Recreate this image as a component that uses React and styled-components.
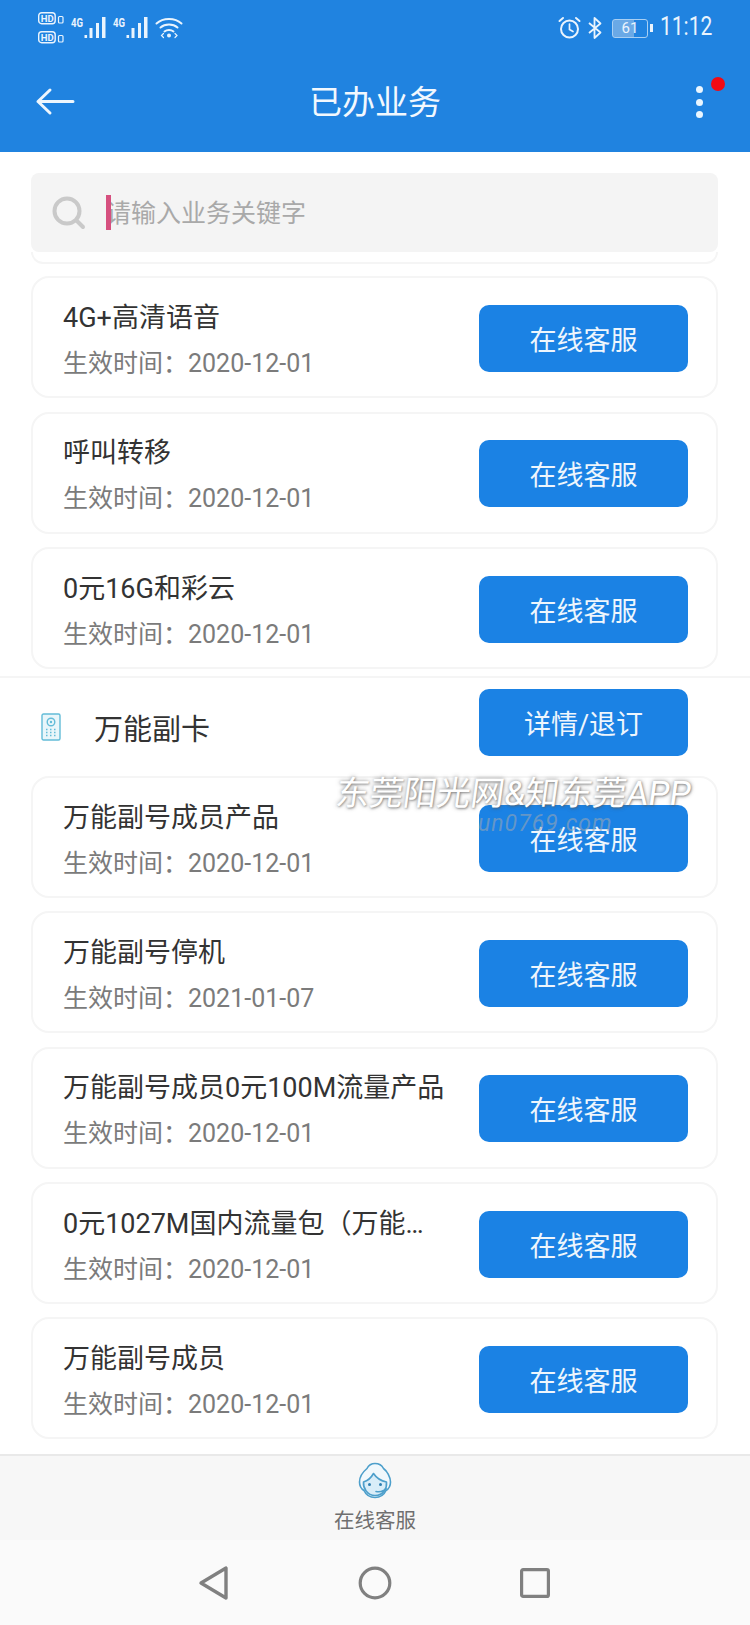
import React from 'react';
import styled, { createGlobalStyle } from 'styled-components';

const GlobalStyle = createGlobalStyle`
  html, body {
    margin: 0;
    padding: 0;
    background: #ffffff;
  }
  * {
    box-sizing: border-box;
  }
`;

const Page = styled.div`
  position: relative;
  width: 750px;
  height: 1625px;
  overflow: hidden;
  display: flex;
  flex-direction: column;
  background: #ffffff;
  font-family: Roboto, "Noto Sans CJK SC", sans-serif;
`;

const Header = styled.header`
  height: 152px;
  flex: none;
  background: #2083e0;
  color: #eaf4fd;
`;

const StatusBar = styled.div`
  height: 54px;
  padding: 12px 39px 0 38px;
  display: flex;
  align-items: flex-start;
  justify-content: space-between;
`;

const StatusGroup = styled.div`
  display: flex;
  align-items: center;
  height: 32px;
  gap: 7px;
`;

const Clock = styled.span`
  display: inline-block;
  font-size: 25px;
  width: 51px;
  margin: -3px 0 0 1px;
  transform: scaleX(0.84);
  transform-origin: left center;
  white-space: nowrap;
`;

const Toolbar = styled.div`
  position: relative;
  height: 96px;
  padding: 0 30px 0 36px;
  display: flex;
  align-items: center;
  justify-content: space-between;
`;

const Title = styled.h1`
  position: absolute;
  left: 0;
  right: 0;
  top: 24px;
  margin: 0;
  text-align: center;
  font-size: 33px;
  line-height: 50px;
  font-weight: 400;
  color: #f2f8fe;
`;

const Dots = styled.div`
  position: relative;
  width: 40px;
  height: 40px;
  display: flex;
  flex-direction: column;
  align-items: center;
  justify-content: center;
  gap: 5.5px;
  margin-right: 1px;
`;

const Dot = styled.span`
  width: 7px;
  height: 7px;
  border-radius: 50%;
  background: #eaf6ff;
`;

const Badge = styled.span`
  position: absolute;
  right: -6px;
  top: -5px;
  width: 14px;
  height: 14px;
  border-radius: 50%;
  background: #f10a14;
`;

const Content = styled.main`
  flex: 1;
  padding-top: 21px;
  overflow: hidden;
`;

const Search = styled.div`
  position: relative;
  height: 79px;
  margin: 0 32px 0 31px;
  padding-left: 21px;
  display: flex;
  align-items: center;
  gap: 20px;
  border-radius: 8px;
  background: #f4f4f4;
`;

const Placeholder = styled.span`
  font-size: 25px;
  color: #a9a9a9;
  margin-bottom: 3px;
`;

const Caret = styled.span`
  position: absolute;
  left: 75px;
  top: 22px;
  width: 5px;
  height: 35px;
  background: #d6507f;
`;

const CardStub = styled.div`
  height: 12px;
  margin: 0 32px 12px 31px;
  border: 2px solid #f5f5f5;
  border-top: none;
  border-radius: 0 0 16px 16px;
`;

const CardList = styled.div`
  display: flex;
  flex-direction: column;
  gap: ${(p) => p.$gap}px;
  margin: 0 32px 0 31px;
`;

const Card = styled.div`
  height: 122px;
  padding: 0 28px 0 30px;
  display: flex;
  align-items: center;
  justify-content: space-between;
  border: 2px solid #f5f5f5;
  border-radius: 18px;
  background: #ffffff;
`;

const CardText = styled.div`
  width: 382px;
  display: flex;
  flex-direction: column;
  gap: 11px;
  margin-top: 6px;
`;

const CardTitle = styled.div`
  font-size: 27px;
  line-height: 36px;
  color: #333333;
  white-space: nowrap;
  overflow: hidden;
  text-overflow: ellipsis;
`;

const CardDate = styled.div`
  font-size: 25px;
  line-height: 34px;
  color: #7b7b7b;
  white-space: nowrap;
`;

const ActionButton = styled.div`
  width: 209px;
  height: 67px;
  flex: none;
  display: flex;
  align-items: center;
  justify-content: center;
  border-radius: 10px;
  background: #1b82e4;
  color: #eef6fd;
  font-size: 27px;
  margin-top: ${(p) => p.$offset || 0}px;
`;

const Section = styled.section`
  margin-top: 7px;
  padding: 11px 32px 20px 41px;
  display: flex;
  align-items: center;
  justify-content: space-between;
  border-top: 2px solid #f5f5f5;
`;

const SectionLabel = styled.div`
  display: flex;
  align-items: center;
  gap: 33px;
  margin-top: 8px;
  font-size: 29px;
  color: #333333;
`;

const SectionButton = styled(ActionButton)`
  margin-right: 30px;
`;

const Watermark = styled.div`
  position: absolute;
  left: 336px;
  top: 772px;
  font-size: 33.7px;
  line-height: 44px;
  white-space: nowrap;
  color: #ffffff;
  transform: skewX(-8deg);
  text-shadow: 0 0 4px rgba(90, 90, 90, 0.7), 1px 1px 2px rgba(90, 90, 90, 0.5);
`;

const WatermarkSite = styled.div`
  position: absolute;
  left: 478px;
  top: 810px;
  font-size: 23px;
  font-style: italic;
  letter-spacing: 1px;
  color: rgba(150, 165, 180, 0.6);
`;

const BottomBar = styled.div`
  height: 86px;
  flex: none;
  display: flex;
  flex-direction: column;
  align-items: center;
  padding-top: 6px;
  border-top: 2px solid #e9e9e9;
  background: #f7f7f7;
  color: #6f6f6f;
  font-size: 20.5px;
`;

const BottomLabel = styled.span`
  line-height: 28px;
  margin-top: 8px;
`;

const NavBar = styled.nav`
  height: 85px;
  flex: none;
  display: flex;
  align-items: center;
  padding: 0 0 0 198px;
  gap: 128px;
  background: #fafafa;
`;

const NavIcon = styled.svg`
  display: block;
  flex: none;
  overflow: visible;
`;

const StatusText = styled.text`
  font-family: Roboto, sans-serif;
  font-weight: 700;
  fill: #eaf4fd;
`;

const SimIcons = () => (
  <NavIcon width="26" height="32" viewBox="0 0 26 32">
    <rect x="0.7" y="0.7" width="16.5" height="11" rx="3" fill="none" stroke="#eaf4fd" strokeWidth="1.4" />
    <StatusText x="2.8" y="9.6" fontSize="9.5">HD</StatusText>
    <rect x="20.5" y="4.5" width="4.5" height="6.5" rx="1" fill="none" stroke="#eaf4fd" strokeWidth="1.2" />
    <rect x="0.7" y="19.7" width="16.5" height="11" rx="3" fill="none" stroke="#eaf4fd" strokeWidth="1.4" />
    <StatusText x="2.8" y="28.6" fontSize="9.5">HD</StatusText>
    <rect x="20.5" y="23.5" width="4.5" height="6.5" rx="1" fill="none" stroke="#eaf4fd" strokeWidth="1.2" />
  </NavIcon>
);

const Signal = () => (
  <NavIcon width="35" height="22" viewBox="0 0 35 22">
    <StatusText x="0" y="10" fontSize="13" textLength="12" lengthAdjust="spacingAndGlyphs">4G</StatusText>
    <g fill="#eaf4fd">
      <rect x="13.5" y="18" width="2.6" height="3" />
      <rect x="18.5" y="11" width="3" height="10" />
      <rect x="25" y="6" width="3" height="15" />
      <rect x="31" y="0" width="3.5" height="21" />
    </g>
  </NavIcon>
);

const Wifi = () => (
  <NavIcon width="28" height="22" viewBox="0 0 28 22" fill="none" stroke="#eaf4fd" strokeWidth="2" strokeLinecap="round">
    <path d="M1.5 6.5 C8 0.5 20 0.5 26.5 6.5" />
    <path d="M5.5 10.5 C10 6.5 18 6.5 22.5 10.5" />
    <path d="M9.5 14.5 C12 12.5 16 12.5 18.5 14.5" />
    <circle cx="14" cy="18.5" r="2" fill="#eaf4fd" stroke="none" />
    <path d="M8.5 16.5 L6.5 18.5 L8.5 20.5 M20 16.5 L22 18.5 L20 20.5" strokeWidth="1.2" />
  </NavIcon>
);

const Alarm = () => (
  <NavIcon width="23" height="24" viewBox="0 0 23 24" fill="none" stroke="#eaf4fd" strokeWidth="2" strokeLinecap="round">
    <circle cx="11.5" cy="13" r="8.5" />
    <path d="M11.5 8 V13.5 L15 15.5" strokeWidth="1.7" />
    <path d="M1.5 5 L5 2 M21.5 5 L18 2" />
  </NavIcon>
);

const Bluetooth = () => (
  <NavIcon width="14" height="24" viewBox="0 0 14 24" fill="none" stroke="#eaf4fd" strokeWidth="1.8" strokeLinejoin="round">
    <path d="M1 7 L12.5 16.5 L6.5 22 V2 L12.5 7.5 L1 17" />
  </NavIcon>
);

const BatteryWrap = styled.div`
  position: relative;
  width: 36px;
  height: 19px;
  border: 1.5px solid #a8cff3;
  border-radius: 3px;
  margin: 0 4px 0 3px;
  display: flex;
  align-items: center;
  justify-content: center;
  font-size: 15px;
  line-height: 16px;
  color: #eaf4fd;
  background: linear-gradient(90deg, #6aa9e6 0 61%, transparent 61%);
`;

const BatteryTip = styled.span`
  position: absolute;
  right: -6px;
  top: 4px;
  width: 3px;
  height: 8px;
  background: #eaf4fd;
`;

const BackArrow = () => (
  <NavIcon width="40" height="30" viewBox="0 0 40 30" fill="none" stroke="#eef6fd" strokeWidth="3" strokeLinecap="round" strokeLinejoin="round">
    <path d="M2 14.5 H37 M14 3 L2 14.5 L14 26" />
  </NavIcon>
);

const SearchIcon = () => (
  <NavIcon width="34" height="34" viewBox="0 0 34 34" fill="none" stroke="#c9c9c9" strokeWidth="4" strokeLinecap="round">
    <circle cx="15" cy="15" r="12.5" />
    <path d="M25 25 L31 31" />
  </NavIcon>
);

const DeviceIcon = () => (
  <NavIcon width="20" height="28" viewBox="0 0 20 28" fill="none" stroke="#63bcd8" strokeWidth="1.4">
    <rect x="1" y="1" width="18" height="26" rx="1.5" fill="#e9f6fa" />
    <circle cx="10" cy="9" r="3.8" />
    <circle cx="10" cy="9" r="1.2" fill="#63bcd8" stroke="none" />
    <path d="M5 16.5 H6.5 M9 16.5 H10.5 M13 16.5 H14.5 M5 19.5 H6.5 M9 19.5 H10.5 M13 19.5 H14.5 M5 22.5 H6.5 M9 22.5 H10.5 M13 22.5 H14.5" strokeWidth="1.5" />
  </NavIcon>
);

const AgentIcon = () => (
  <NavIcon width="34" height="37" viewBox="0 0 34 37" fill="none" stroke="#4d9fcb" strokeWidth="1.6" strokeLinecap="round" strokeLinejoin="round">
    <path d="M17 1.5 C21 1.5 24 3.5 25.5 6.5 C29 9 32.5 15 32.5 20 C32.5 24 30.5 27 28 28.5 C26 33 22 35.5 17 35.5 C12 35.5 8 33 6 28.5 C3.5 27 1.5 24 1.5 20 C1.5 13 6 9 9 6.5 C10.5 3.5 13.5 1.5 17 1.5 Z" fill="#f1f8fc" />
    <path d="M5.5 20 C9 19 13 16 15.5 11.5 C18.5 16 23 19 28.5 20 C29 26 26 33.5 17 33.5 C9 33.5 5 26 5.5 20 Z" fill="#d9edf8" />
    <circle cx="11.5" cy="22.5" r="1.5" fill="#2f7fb0" stroke="none" />
    <circle cx="22.5" cy="22.5" r="1.5" fill="#2f7fb0" stroke="none" />
    <path d="M28 26.5 C26 29.5 22 30 18 29.5" />
  </NavIcon>
);

const BackKey = () => (
  <NavIcon width="32" height="36" viewBox="0 0 32 36" fill="none" stroke="#808080" strokeWidth="3.4" strokeLinejoin="round">
    <path d="M28 3 V33 L3 18 Z" />
  </NavIcon>
);

const HomeKey = () => (
  <NavIcon width="34" height="34" viewBox="0 0 34 34" fill="none" stroke="#808080" strokeWidth="3.2">
    <circle cx="17" cy="17" r="14.8" />
  </NavIcon>
);

const RecentKey = () => (
  <NavIcon width="30" height="30" viewBox="0 0 30 30" fill="none" stroke="#808080" strokeWidth="3.2" strokeLinejoin="round">
    <rect x="1.6" y="1.6" width="26.8" height="26.8" rx="1.5" />
  </NavIcon>
);

const topItems = [
  { name: '4G+高清语音', date: '2020-12-01' },
  { name: '呼叫转移', date: '2020-12-01' },
  { name: '0元16G和彩云', date: '2020-12-01' },
];

const cardItems = [
  { name: '万能副号成员产品', date: '2020-12-01' },
  { name: '万能副号停机', date: '2021-01-07' },
  { name: '万能副号成员0元100M流量产品', date: '2020-12-01' },
  { name: '0元1027M国内流量包（万能副号）', date: '2020-12-01' },
  { name: '万能副号成员', date: '2020-12-01' },
];

const ServiceCard = ({ item }) => (
  <Card>
    <CardText>
      <CardTitle>{item.name}</CardTitle>
      <CardDate>生效时间：{item.date}</CardDate>
    </CardText>
    <ActionButton $offset={2}>在线客服</ActionButton>
  </Card>
);

const App = () => {
  return (
    <Page>
      <GlobalStyle />
      <Header>
        <StatusBar>
          <StatusGroup>
            <SimIcons />
            <Signal />
            <Signal />
            <Wifi />
          </StatusGroup>
          <StatusGroup>
            <Alarm />
            <Bluetooth />
            <BatteryWrap>
              61
              <BatteryTip />
            </BatteryWrap>
            <Clock>11:12</Clock>
          </StatusGroup>
        </StatusBar>
        <Toolbar>
          <BackArrow />
          <Title>已办业务</Title>
          <Dots>
            <Dot />
            <Dot />
            <Dot />
            <Badge />
          </Dots>
        </Toolbar>
      </Header>
      <Content>
        <Search>
          <SearchIcon />
          <Placeholder>请输入业务关键字</Placeholder>
          <Caret />
        </Search>
        <CardStub />
        <CardList $gap={13.6}>
          {topItems.map((item) => (
            <ServiceCard key={item.name} item={item} />
          ))}
        </CardList>
        <Section>
          <SectionLabel>
            <DeviceIcon />
            万能副卡
          </SectionLabel>
          <SectionButton>详情/退订</SectionButton>
        </Section>
        <CardList $gap={13.3}>
          {cardItems.map((item) => (
            <ServiceCard key={item.name} item={item} />
          ))}
        </CardList>
      </Content>
      <BottomBar>
        <AgentIcon />
        <BottomLabel>在线客服</BottomLabel>
      </BottomBar>
      <NavBar>
        <BackKey />
        <HomeKey />
        <RecentKey />
      </NavBar>
      <Watermark>东莞阳光网&amp;知东莞APP</Watermark>
      <WatermarkSite>un0769.com</WatermarkSite>
    </Page>
  );
};

export default App;
